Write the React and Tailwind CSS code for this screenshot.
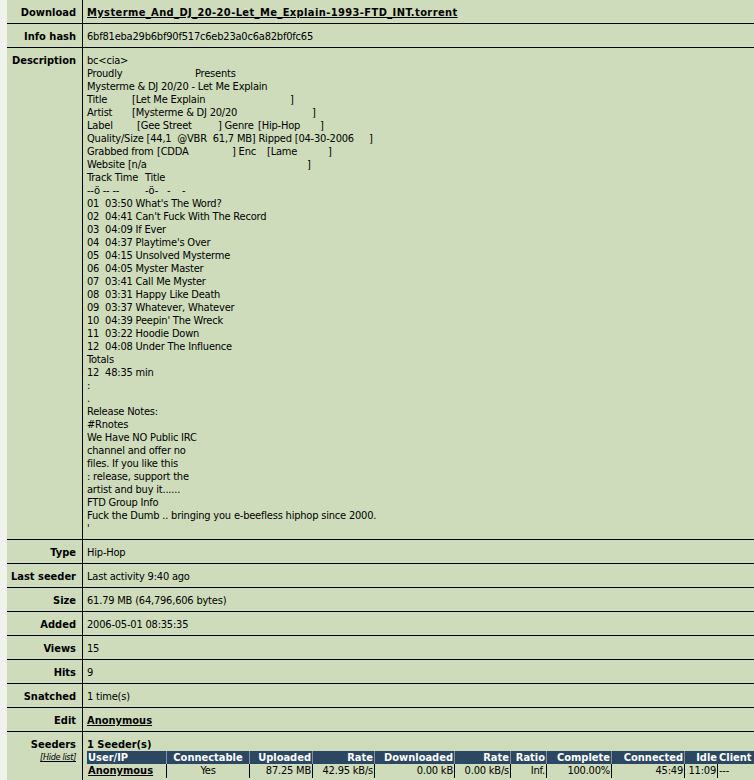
import React from "react";

function Row({ label, children, sub, last }) {
  return (
    <div className={last ? "flex" : "flex border-b border-black"}>
      <div className="w-[76px] shrink-0 border-r border-black pr-[6px] pt-[6px] pb-[4px] text-right font-bold tracking-normal">
        <div>{label}</div>
        {sub}
      </div>
      <div className="flex-1 pl-[4px] pt-[6px] pb-[4px]">{children}</div>
    </div>
  );
}

const tracks = [
  "01  03:50 What's The Word?",
  "02  04:41 Can't Fuck With The Record",
  "03  04:09 If Ever",
  "04  04:37 Playtime's Over",
  "05  04:15 Unsolved Mysterme",
  "06  04:05 Myster Master",
  "07  03:41 Call Me Myster",
  "08  03:31 Happy Like Death",
  "09  03:37 Whatever, Whatever",
  "10  04:39 Peepin' The Wreck",
  "11  03:22 Hoodie Down",
  "12  04:08 Under The Influence",
];

const notes = [
  "Totals",
  "12  48:35 min",
  ":",
  ".",
  "Release Notes:",
  "#Rnotes",
  "We Have NO Public IRC",
  "channel and offer no",
  "files. If you like this",
  ": release, support the",
  "artist and buy it......",
  "FTD Group Info",
  "Fuck the Dumb .. bringing you e-beefless hiphop since 2000.",
  "'",
];

function Description() {
  return (
    <div className="whitespace-pre">
      <div className="h-[13px]">{"bc<cia>"}</div>
      <div className="h-[13px]"><span className="inline-block w-[108px]">Proudly</span>Presents</div>
      <div className="h-[13px]">Mysterme &amp; DJ 20/20 - Let Me Explain</div>
      <div className="h-[13px]"><span className="inline-block w-[45px]">Title</span><span className="inline-block w-[158px]">[Let Me Explain</span>]</div>
      <div className="h-[13px]"><span className="inline-block w-[45px]">Artist</span><span className="inline-block w-[180px]">[Mysterme &amp; DJ 20/20</span>]</div>
      <div className="h-[13px]"><span className="inline-block w-[50px]">Label</span><span className="inline-block w-[81px]">[Gee Street</span><span className="inline-block w-[40px]">] Genre</span><span className="inline-block w-[62px]">[Hip-Hop</span>]</div>
      <div className="h-[13px]"><span className="inline-block w-[282px]">Quality/Size [44,1  @VBR  61,7 MB] Ripped [04-30-2006</span>]</div>
      <div className="h-[13px]"><span className="inline-block w-[70px]">Grabbed from</span><span className="inline-block w-[75px]">[CDDA</span><span className="inline-block w-[35px]">] Enc</span><span className="inline-block w-[61px]">[Lame</span>]</div>
      <div className="h-[13px]"><span className="inline-block w-[220px]">Website [n/a</span>]</div>
      <div className="h-[13px]"><span className="inline-block w-[58px]">Track Time</span>Title</div>
      <div className="h-[13px]"><span className="inline-block w-[58px]">--ö -- --</span><span className="inline-block w-[22px]">-ö-</span><span className="inline-block w-[15px]">-</span>-</div>
      {tracks.map((t) => <div key={t} className="h-[13px]">{t}</div>)}
      {notes.map((t, i) => <div key={i} className="h-[13px]">{t}</div>)}
    </div>
  );
}

function PeersTable() {
  const hd = "h-[13px] border-r border-[#7d91a3] px-[1px] whitespace-nowrap overflow-hidden bg-[#2c4761] text-white font-bold tracking-normal";
  const dc = "h-[14px] border-r border-black px-[1px] whitespace-nowrap overflow-hidden";
  return (
    <div className="grid grid-cols-[80px_83px_63px_62px_80px_56px_36px_65px_73px_33px_37px] w-[668px] leading-[13px]">
      <div className={`${hd} text-left`}>User/IP</div>
      <div className={`${hd} text-center`}>Connectable</div>
      <div className={`${hd} text-right`}>Uploaded</div>
      <div className={`${hd} text-right`}>Rate</div>
      <div className={`${hd} text-right`}>Downloaded</div>
      <div className={`${hd} text-right`}>Rate</div>
      <div className={`${hd} text-right`}>Ratio</div>
      <div className={`${hd} text-right`}>Complete</div>
      <div className={`${hd} text-right`}>Connected</div>
      <div className="h-[13px] px-[1px] bg-[#2c4761] text-white font-bold tracking-normal text-right whitespace-nowrap">Idle</div>
      <div className="h-[13px] px-[1px] bg-[#2c4761] text-white font-bold tracking-normal text-left whitespace-nowrap overflow-hidden">Client</div>

      <div className={`${dc} text-left font-bold underline tracking-normal`}>Anonymous</div>
      <div className={`${dc} text-center`}>Yes</div>
      <div className={`${dc} text-right`}>87.25 MB</div>
      <div className={`${dc} text-right`}>42.95 kB/s</div>
      <div className={`${dc} text-right`}>0.00 kB</div>
      <div className={`${dc} text-right`}>0.00 kB/s</div>
      <div className={`${dc} text-right`}>Inf.</div>
      <div className={`${dc} text-right`}>100.00%</div>
      <div className={`${dc} text-right`}>45:49</div>
      <div className={`${dc} text-right`}>11:09</div>
      <div className="h-[14px] px-[1px] text-left whitespace-nowrap">---</div>
    </div>
  );
}

export default function App() {
  return (
    <div className="flex w-[754px] h-[780px] overflow-hidden bg-[#f1f1ee] font-['DejaVu_Sans_Condensed','DejaVu_Sans',sans-serif] text-[11px] leading-[13px] tracking-[-0.2px] text-black">
      <div className="w-[7px] shrink-0 bg-[#f1f1ee]" />
      <div className="flex-1 flex flex-col bg-[#cedcbb]">
        <Row label="Download">
          <span className="font-bold underline tracking-[0.4px] whitespace-nowrap">Mysterme_And_DJ_20-20-Let_Me_Explain-1993-FTD_INT.torrent</span>
        </Row>
        <Row label="Info hash">6bf81eba29b6bf90f517c6eb23a0c6a82bf0fc65</Row>
        <Row label="Description"><Description /></Row>
        <Row label="Type">Hip-Hop</Row>
        <Row label="Last seeder">Last activity 9:40 ago</Row>
        <Row label="Size">61.79 MB (64,796,606 bytes)</Row>
        <Row label="Added">2006-05-01 08:35:35</Row>
        <Row label="Views">15</Row>
        <Row label="Hits">9</Row>
        <Row label="Snatched">1 time(s)</Row>
        <Row label="Edit"><span className="font-bold underline tracking-normal">Anonymous</span></Row>
        <Row
          label="Seeders"
          last
          sub={<div className="text-[9px] leading-[11px] font-normal italic underline tracking-[-0.3px] mt-[1px]">[Hide list]</div>}
        >
          <div className="font-bold tracking-normal">1 Seeder(s)</div>
          <PeersTable />
        </Row>
      </div>
    </div>
  );
}
